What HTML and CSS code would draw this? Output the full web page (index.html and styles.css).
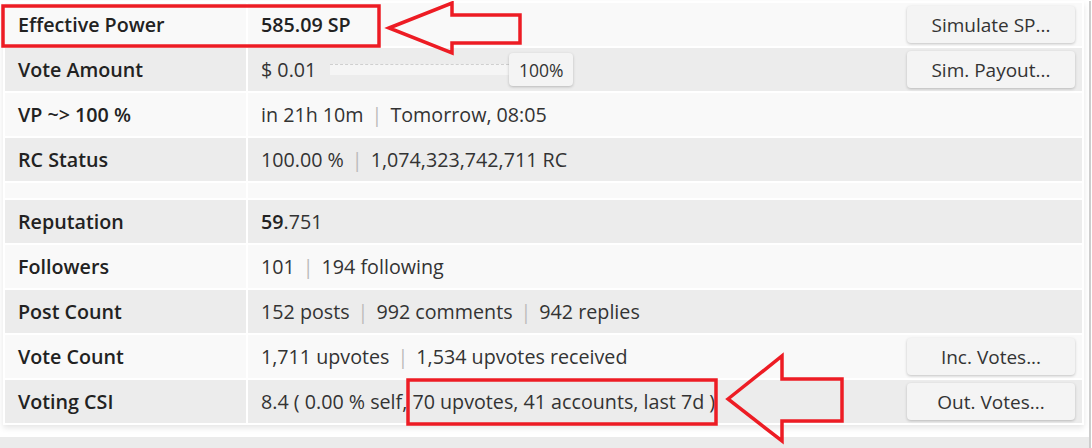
FILE: index.html
```html
<!DOCTYPE html>
<html>
<head>
<meta charset="utf-8">
<link rel="stylesheet" href="styles.css">
</head>
<body>
<div class="page">
  <div class="card">
    <div class="row light">
      <div class="label">Effective Power</div>
      <div class="value"><span class="strong">585.09 SP</span><button class="btn">Simulate SP...</button></div>
    </div>
    <div class="row dark">
      <div class="label">Vote Amount</div>
      <div class="value"><span>$ 0.01</span><span class="bar"></span><button class="pct">100%</button><button class="btn">Sim. Payout...</button></div>
    </div>
    <div class="row light">
      <div class="label">VP ~&gt; 100 %</div>
      <div class="value">in 21h 10m<span class="sep">|</span>Tomorrow, 08:05</div>
    </div>
    <div class="row dark">
      <div class="label">RC Status</div>
      <div class="value">100.00 %<span class="sep">|</span>1,074,323,742,711 RC</div>
    </div>
    <div class="row light spacer">
      <div class="label"></div>
      <div class="value"></div>
    </div>
    <div class="row dark">
      <div class="label">Reputation</div>
      <div class="value"><span class="strong">59</span>.751</div>
    </div>
    <div class="row light">
      <div class="label">Followers</div>
      <div class="value">101<span class="sep">|</span>194 following</div>
    </div>
    <div class="row dark">
      <div class="label">Post Count</div>
      <div class="value">152 posts<span class="sep">|</span>992 comments<span class="sep">|</span>942 replies</div>
    </div>
    <div class="row light">
      <div class="label">Vote Count</div>
      <div class="value"><span>1,711 upvotes<span class="sep">|</span>1,534 upvotes received</span><button class="btn">Inc. Votes...</button></div>
    </div>
    <div class="row dark">
      <div class="label">Voting CSI</div>
      <div class="value"><span>8.4 ( 0.00 % self, 70 upvotes, 41 accounts, last 7d )</span><button class="btn">Out. Votes...</button></div>
    </div>
  </div>
  <div class="footer"></div>

  <svg class="marks" width="1092" height="448" viewBox="0 0 1092 448">
    <g fill="none" stroke="#ed1c24" stroke-width="3.5" stroke-linejoin="miter">
      <rect x="3" y="5" width="376" height="40"/>
      <polygon points="389,27 452,2 452,14 520,14 520,42 452,42 452,52"/>
      <rect x="408" y="379" width="308" height="44"/>
      <polygon points="728,398 782,355 782,378 842,378 842,420 782,420 782,440"/>
    </g>
  </svg>
</div>
</body>
</html>
```

FILE: styles.css
```css
* { box-sizing: border-box; }
html, body { margin: 0; padding: 0; background: #ffffff; }
body {
  font-family: "Open Sans", "Noto Sans", sans-serif;
  color: #333;
  width: 1092px;
  height: 448px;
  overflow: hidden;
}
.page {
  position: relative;
  width: 1092px;
  height: 448px;
}
.page::after {
  content: "";
  position: absolute;
  top: 0;
  right: 1px;
  width: 2px;
  height: 448px;
  background: #cdcdcd;
}
.card {
  margin: 1px 0 0 3px;
  width: 1081px;
  padding: 2px;
  background: #fff;
  display: flex;
  flex-direction: column;
  gap: 2px;
  box-shadow: 0 3px 6px rgba(0, 0, 0, 0.10);
}
.row {
  display: grid;
  grid-template-columns: 241px 1fr;
  column-gap: 2px;
  height: 43px;
  font-size: 19.7px;
}
.row.spacer { height: 15px; }
.light .label, .light .value { background: #f9f9f9; }
.dark .label, .dark .value { background: #ececec; }
.label {
  display: flex;
  align-items: center;
  padding-left: 13px;
  font-weight: 600;
  color: #222;
}
.value {
  display: flex;
  align-items: center;
  padding-left: 13px;
  padding-right: 7px;
  color: #333;
  white-space: pre;
}
.strong { font-weight: 600; color: #222; }
.sep { color: #bbb; margin: 0 8px; }
.btn {
  margin-left: auto;
  width: 168px;
  height: 37px;
  border: none;
  border-radius: 4px;
  background: #f4f4f4;
  box-shadow: 0 1px 3px rgba(0, 0, 0, 0.22);
  font-family: inherit;
  font-size: 19px;
  color: #333;
  padding: 0;
}
.bar {
  width: 179px;
  height: 11px;
  margin-left: 14px;
  border-top: 1px dashed #cfcfcf;
  background: #f5f5f5;
}
.pct {
  width: 64px;
  height: 33px;
  border: none;
  border-radius: 4px;
  background: #f4f4f4;
  box-shadow: 0 1px 3px rgba(0, 0, 0, 0.22);
  font-family: inherit;
  font-size: 17.5px;
  color: #333;
  padding: 0;
}
.footer {
  margin-top: 12px;
  width: 1089px;
  height: 11px;
  background: #ebebeb;
}
.marks {
  position: absolute;
  left: 0;
  top: 0;
  pointer-events: none;
}
```
